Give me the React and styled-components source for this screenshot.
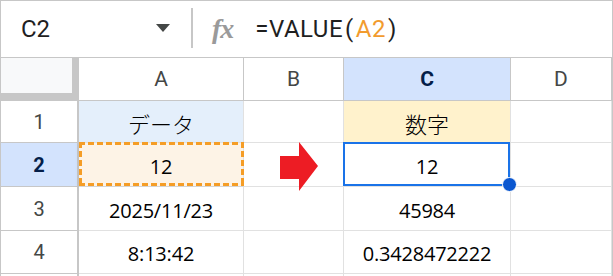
import React from "react";
import styled, { createGlobalStyle } from "styled-components";

const GlobalStyle = createGlobalStyle`
  html, body {
    margin: 0;
    padding: 0;
    background: #ffffff;
  }
  * {
    box-sizing: border-box;
  }
`;

const Frame = styled.div`
  width: 613px;
  height: 276px;
  border: 1px solid #c7c7c7;
  border-bottom: none;
  background: #ffffff;
  overflow: hidden;
  font-family: Roboto, "Liberation Sans", sans-serif;
`;

const Toolbar = styled.div`
  height: 57px;
  border-bottom: 1px solid #c7c7c7;
  display: flex;
  align-items: center;
`;

const NameBox = styled.div`
  width: 190px;
  display: flex;
  align-items: center;
  justify-content: space-between;
  padding: 0 21px 0 20px;
  font-size: 24px;
  color: #1f1f1f;
`;

const Caret = styled.span`
  width: 0;
  height: 0;
  border-left: 7px solid transparent;
  border-right: 7px solid transparent;
  border-top: 8px solid #444746;
  margin-top: -2px;
`;

const Divider = styled.div`
  width: 2px;
  height: 40px;
  margin-top: -2px;
  background: #c7c7c7;
`;

const Fx = styled.span`
  font-family: "Liberation Serif", serif;
  font-style: italic;
  font-weight: bold;
  font-size: 28px;
  color: #9a9a9a;
  margin: 0 22px 0 19px;
  letter-spacing: -1px;
`;

const Formula = styled.div`
  font-size: 24px;
  color: #1f1f1f;
  letter-spacing: 0.5px;
`;

const Paren = styled.span`
  margin: 0 2px;
`;

const Ref = styled.span`
  color: #f29b2e;
`;

const Grid = styled.div`
  display: grid;
  grid-template-columns: 78px 165px 100px 167px 1fr;
  grid-template-rows: 43px 42px 44px 44px 43px 10px;
`;

const Corner = styled.div`
  background: #f8f9fa;
  border-right: 7px solid #c7c7c7;
  border-bottom: 8px solid #c7c7c7;
`;

const ColHead = styled.div`
  display: flex;
  align-items: center;
  justify-content: center;
  border-right: 1px solid #c7c7c7;
  border-bottom: 1px solid #c7c7c7;
  font-size: 21px;
  color: ${(p) => (p.$active ? "#041e49" : "#444746")};
  font-weight: ${(p) => (p.$active ? "bold" : "normal")};
  background: ${(p) => (p.$active ? "#d3e3fd" : "#ffffff")};
`;

const RowHead = styled.div`
  display: flex;
  align-items: center;
  justify-content: center;
  border-right: 2px solid #c7c7c7;
  border-bottom: 1px solid #c7c7c7;
  font-size: 20px;
  color: ${(p) => (p.$active ? "#041e49" : "#444746")};
  font-weight: ${(p) => (p.$active ? "bold" : "normal")};
  background: ${(p) => (p.$active ? "#d3e3fd" : "#ffffff")};
`;

const Cell = styled.div`
  position: relative;
  display: flex;
  align-items: center;
  justify-content: center;
  border-right: 1px solid #e1e1e1;
  border-bottom: 1px solid #e1e1e1;
  background: ${(p) => p.$bg || "#ffffff"};
  font-family: "Open Sans", "Noto Sans", sans-serif;
  font-size: 20px;
  letter-spacing: -0.2px;
  color: #000000;
  padding-top: 3px;
`;

const Jp = styled.span`
  font-family: "Noto Sans CJK JP", "Noto Sans", sans-serif;
  font-weight: 300;
  font-size: 22px;
  letter-spacing: 0;
`;

const dashH = "repeating-linear-gradient(90deg, #f59d26 0 6px, transparent 6px 9px)";
const dashV = "repeating-linear-gradient(180deg, #f59d26 0 6px, transparent 6px 9px)";

const CopyBox = styled.div`
  position: absolute;
  left: 0;
  top: -1px;
  right: -1px;
  bottom: 0;
  background: ${dashH} top left / 100% 3px no-repeat,
    ${dashH} bottom left / 100% 3px no-repeat,
    ${dashV} top left / 3px 100% no-repeat,
    ${dashV} top right / 3px 100% no-repeat;
  box-shadow: 0 2px 5px rgba(0, 0, 0, 0.08);
  pointer-events: none;
`;

const SelectBox = styled.div`
  position: absolute;
  z-index: 3;
  left: -1px;
  top: -1px;
  right: 0;
  bottom: 0;
  border: 2px solid #1a73e8;
  pointer-events: none;
`;

const Handle = styled.span`
  position: absolute;
  right: -9px;
  bottom: -8px;
  width: 15px;
  height: 15px;
  border-radius: 50%;
  background: #0b57d0;
  border: 1px solid #ffffff;
`;

const ArrowWrap = styled.div`
  position: relative;
  z-index: 2;
  display: flex;
  margin: 2px 0 0 11px;
`;

const Arrow = () => (
  <ArrowWrap>
    <svg width="40" height="50" viewBox="0 0 40 50">
      <polygon points="1,14 20,14 20,0 39,24 20,49 20,37 1,37" fill="#ed1c24" />
    </svg>
  </ArrowWrap>
);

const columns = ["A", "B", "C", "D"];

const rows = [
  { n: 1, a: <Jp>データ</Jp>, aBg: "#e4effb", c: <Jp>数字</Jp>, cBg: "#fff2cc" },
  { n: 2, a: "12", aBg: "#fdf3e6", c: "12", active: true },
  { n: 3, a: "2025/11/23", c: "45984" },
  { n: 4, a: "8:13:42", c: "0.3428472222" },
];

export default function App() {
  return (
    <>
      <GlobalStyle />
      <Frame>
        <Toolbar>
          <NameBox>
            C2
            <Caret />
          </NameBox>
          <Divider />
          <Fx>fx</Fx>
          <Formula>
            =VALUE<Paren>(</Paren>
            <Ref>A2</Ref>
            <Paren>)</Paren>
          </Formula>
        </Toolbar>
        <Grid>
          <Corner />
          {columns.map((c) => (
            <ColHead key={c} $active={c === "C"}>
              {c}
            </ColHead>
          ))}
          {rows.map((r) => (
            <React.Fragment key={r.n}>
              <RowHead $active={r.active}>{r.n}</RowHead>
              <Cell $bg={r.aBg}>
                {r.a}
                {r.active && <CopyBox />}
              </Cell>
              <Cell>{r.active && <Arrow />}</Cell>
              <Cell $bg={r.cBg}>
                {r.c}
                {r.active && (
                  <SelectBox>
                    <Handle />
                  </SelectBox>
                )}
              </Cell>
              <Cell />
            </React.Fragment>
          ))}
          <RowHead />
          <Cell />
          <Cell />
          <Cell />
          <Cell />
        </Grid>
      </Frame>
    </>
  );
}
